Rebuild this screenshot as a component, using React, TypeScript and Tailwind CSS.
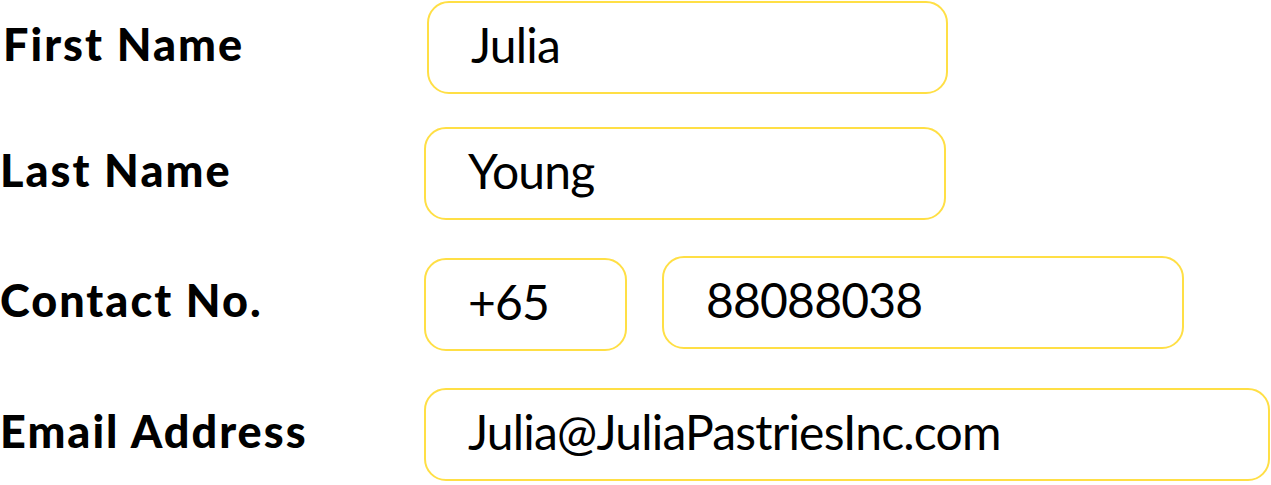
import React from "react";

const font = { fontFamily: "Lato, 'Noto Sans', sans-serif" };

function Field({ value, className }: { value: string; className: string }) {
  return (
    <div
      className={`flex h-[93px] items-center rounded-[22px] border-[2.5px] border-[#ffdf45] pl-[42px] text-[48px] leading-none tracking-[-0.8px] text-black ${className}`}
    >
      <span className="-mt-[6px]">{value}</span>
    </div>
  );
}

function Label({ text }: { text: string }) {
  return (
    <div className="flex h-[93px] items-center text-[45px] font-black leading-none tracking-[2px] text-black">
      <span className="-mt-[6px]">{text}</span>
    </div>
  );
}

export default function App() {
  return (
    <div className="h-[485px] w-[1271px] bg-white" style={font}>
      <div className="grid grid-cols-[424px_1fr]">
        <div className="mt-[1px] pl-[3px]">
          <Label text="First Name" />
        </div>
        <div className="mt-[1px] pl-[3px]">
          <Field value="Julia" className="w-[521px]" />
        </div>

        <div className="mt-[33px]">
          <Label text="Last Name" />
        </div>
        <div className="mt-[33px]">
          <Field value="Young" className="w-[522px]" />
        </div>

        <div className="mt-[37px]">
          <Label text="Contact No." />
        </div>
        <div className="mt-[36px] flex items-start gap-[35px]">
          <Field value="+65" className="mt-[2px] w-[203px]" />
          <Field value="88088038" className="w-[522px]" />
        </div>

        <div className="mt-[37px]">
          <Label text="Email Address" />
        </div>
        <div className="mt-[37px]">
          <Field value="Julia@JuliaPastriesInc.com" className="w-[846px]" />
        </div>
      </div>
    </div>
  );
}
